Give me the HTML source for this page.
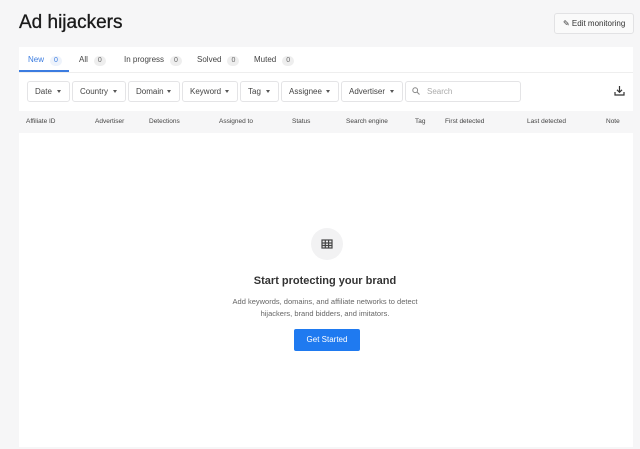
<!DOCTYPE html><html><head><style>
*{box-sizing:border-box;margin:0;padding:0}
body{width:640px;height:449px;background:#f6f6f7;font-family:"Liberation Sans",sans-serif;color:#333;position:relative;overflow:hidden}
.a{position:absolute}
h1{position:absolute;left:19px;top:12px;font-size:19px;font-weight:normal;color:#1a1a1a;-webkit-text-stroke:0.3px #1a1a1a}
.edit{left:554px;top:13px;width:80px;height:21px;border:1px solid #e2e2e4;border-radius:3px;background:#fafafa;font-size:8px;line-height:19px;padding-left:8px}
.card{left:19px;top:47px;width:614px;height:400px;background:#fff}
.tab{top:55px;font-size:8px;color:#444}
.badge{display:inline-block;background:#eee;border-radius:6px;padding:0 4px;margin-left:6px;font-size:7px;color:#666;line-height:10px}
.f{top:81px;height:21px;border:1px solid #e4e4e6;border-radius:3px;font-size:8px;line-height:19px;padding-left:7px;color:#444;background:#fff}
.c:after{content:"";position:absolute;right:8px;top:8px;border:2.5px solid transparent;border-top:3px solid #555}
.th{top:118px;font-size:6.5px;color:#444}
</style></head><body>
<h1>Ad hijackers</h1>
<div class="a edit">✎ Edit monitoring</div>
<div class="a card"></div>
<div class="a" style="left:19px;top:72px;width:614px;height:1px;background:#eee"></div>
<div class="a" style="left:19px;top:70px;width:50px;height:2px;background:#3b7ce0"></div>
<div class="a tab" style="left:28px;color:#3b7ce0">New<span class="badge" style="color:#3b7ce0;background:#eef3fb">0</span></div>
<div class="a tab" style="left:79px">All<span class="badge">0</span></div>
<div class="a tab" style="left:124px">In progress<span class="badge">0</span></div>
<div class="a tab" style="left:197px">Solved<span class="badge">0</span></div>
<div class="a tab" style="left:254px">Muted<span class="badge">0</span></div>
<div class="a f c" style="left:27px;width:43px">Date</div>
<div class="a f c" style="left:72px;width:54px">Country</div>
<div class="a f c" style="left:128px;width:52px">Domain</div>
<div class="a f c" style="left:182px;width:56px">Keyword</div>
<div class="a f c" style="left:240px;width:39px">Tag</div>
<div class="a f c" style="left:281px;width:58px">Assignee</div>
<div class="a f c" style="left:341px;width:62px">Advertiser</div>
<div class="a f" style="left:405px;width:116px;color:#aaa;padding-left:21px">Search</div>
<svg class="a" style="left:412px;top:87px" width="8" height="8"><circle cx="3.2" cy="3.2" r="2.4" fill="none" stroke="#888" stroke-width="1"/><path d="M5 5L7.5 7.5" stroke="#888" stroke-width="1"/></svg>
<svg class="a" style="left:614px;top:85px" width="11" height="11"><g fill="none" stroke="#333" stroke-width="1.2"><path d="M5.5 1V7M3 4.8L5.5 7.3 8 4.8M1 7V10H10V7"/></g></svg>
<div class="a" style="left:19px;top:111px;width:614px;height:22px;background:#f6f6f7"></div>
<div class="a th" style="left:26px">Affiliate ID</div>
<div class="a th" style="left:95px">Advertiser</div>
<div class="a th" style="left:149px">Detections</div>
<div class="a th" style="left:219px">Assigned to</div>
<div class="a th" style="left:292px">Status</div>
<div class="a th" style="left:346px">Search engine</div>
<div class="a th" style="left:415px">Tag</div>
<div class="a th" style="left:445px">First detected</div>
<div class="a th" style="left:527px">Last detected</div>
<div class="a th" style="left:606px">Note</div>
<div class="a" style="left:311px;top:228px;width:32px;height:32px;border-radius:50%;background:#f2f2f3"></div>
<svg class="a" style="left:321px;top:239px" width="12" height="10"><g fill="none" stroke="#444" stroke-width="1.2"><rect x="1" y="1" width="10" height="8"/><path d="M1 4H11M1 6.5H11M4.3 1V9M7.6 1V9"/></g></svg>
<div class="a" style="left:0;width:650px;top:275px;text-align:center;font-size:11px;font-weight:bold;color:#333">Start protecting your brand</div>
<div class="a" style="left:0;width:650px;top:296px;text-align:center;font-size:7.5px;color:#666;line-height:12px">Add keywords, domains, and affiliate networks to detect<br>hijackers, brand bidders, and imitators.</div>
<div class="a" style="left:294px;top:329px;width:66px;height:22px;background:#1f7af0;border-radius:2px;color:#fff;font-size:8px;text-align:center;line-height:22px">Get Started</div>
</body></html>
